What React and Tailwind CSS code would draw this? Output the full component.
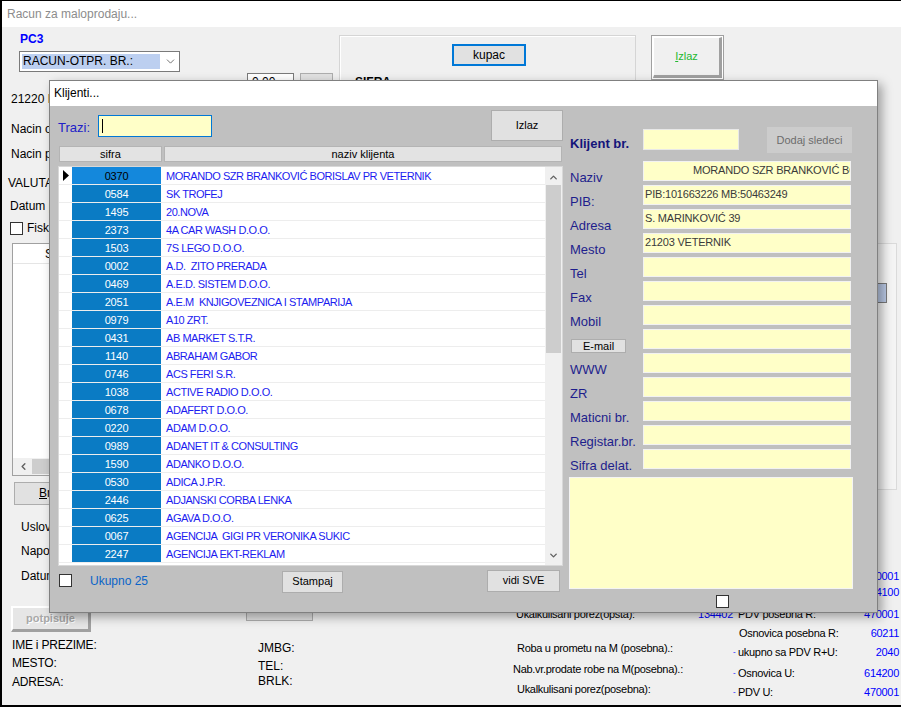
import { ChevronDown, ChevronUp, ChevronLeft } from 'lucide-react'

const clients = [
  ['0370', 'MORANDO SZR BRANKOVIĆ BORISLAV PR VETERNIK'],
  ['0584', 'SK TROFEJ'],
  ['1495', '20.NOVA'],
  ['2373', '4A CAR WASH D.O.O.'],
  ['1503', '7S LEGO D.O.O.'],
  ['0002', 'A.D.  ZITO PRERADA'],
  ['0469', 'A.E.D. SISTEM D.O.O.'],
  ['2051', 'A.E.M  KNJIGOVEZNICA I STAMPARIJA'],
  ['0979', 'A10 ZRT.'],
  ['0431', 'AB MARKET S.T.R.'],
  ['1140', 'ABRAHAM GABOR'],
  ['0746', 'ACS FERI S.R.'],
  ['1038', 'ACTIVE RADIO D.O.O.'],
  ['0678', 'ADAFERT D.O.O.'],
  ['0220', 'ADAM D.O.O.'],
  ['0989', 'ADANET IT & CONSULTING'],
  ['1590', 'ADANKO D.O.O.'],
  ['0530', 'ADICA J.P.R.'],
  ['2446', 'ADJANSKI CORBA LENKA'],
  ['0625', 'AGAVA D.O.O.'],
  ['0067', 'AGENCIJA  GIGI PR VERONIKA SUKIC'],
  ['2247', 'AGENCIJA EKT-REKLAM'],
]

const fields = [
  { label: 'Naziv', value: 'MORANDO SZR BRANKOVIĆ BORISLAV PR VETERNIK', indent: true },
  { label: 'PIB:', value: 'PIB:101663226 MB:50463249' },
  { label: 'Adresa', value: 'S. MARINKOVIĆ 39' },
  { label: 'Mesto', value: '21203 VETERNIK' },
  { label: 'Tel' },
  { label: 'Fax' },
  { label: 'Mobil' },
  { label: 'E-mail', button: true },
  { label: 'WWW' },
  { label: 'ZR' },
  { label: 'Maticni br.' },
  { label: 'Registar.br.' },
  { label: 'Sifra delat.' },
]

function Label({ children, mt }) {
  return <div className={`h-[14px] leading-[14px] text-[12px] text-black whitespace-nowrap ${mt}`}>{children}</div>
}

function Background() {
  return (
    <div className="flex h-[678px]">
      {/* leva kolona */}
      <div className="w-[238px] shrink-0 flex flex-col">
        <div className="mt-[5px] h-[14px] leading-[14px] pl-[18px] text-[12px] font-bold text-[#0000ff]">PC3</div>
        <div className="mt-[5px] ml-[17px] w-[161px] h-[21px] border border-[#7a7a7a] bg-white flex items-center px-[2px]">
          <span className="w-[138px] h-[15px] leading-[15px] bg-[#bccff0] text-[12px] text-black pl-[1px]">RACUN-OTPR. BR.:</span>
          <ChevronDown size={13} strokeWidth={1.5} className="ml-[4px] text-[#555]" />
        </div>
        <div className="mt-[20px] pl-[9px]"><Label>21220 B</Label></div>
        <div className="pl-[9px]">
          <Label mt="mt-[16px]">Nacin o</Label>
          <Label mt="mt-[11px]">Nacin p</Label>
        </div>
        <div className="pl-[6px]"><Label mt="mt-[15px]">VALUTA</Label></div>
        <div className="pl-[8px]"><Label mt="mt-[9px]">Datum p</Label></div>
        <div className="mt-[8px] pl-[8px] flex items-center gap-[4px] h-[14px]">
          <div className="w-[13px] h-[13px] border border-[#333] bg-white" />
          <span className="text-[12px]">Fiska</span>
        </div>
        <div className="mt-[8px] ml-[10px] w-[228px] h-[233px] border border-[#a0a0a0] bg-white flex flex-col">
          <div className="h-[20px] border-b border-[#e5e5e5] text-[12px] leading-[20px] pl-[32px]">S</div>
          <div className="mt-auto h-[17px] bg-[#f0f0f0] flex items-center">
            <ChevronLeft size={11} strokeWidth={3} className="ml-[5px] text-[#606060]" />
            <div className="ml-[3px] w-[60px] h-[15px] bg-[#cdcdcd]" />
          </div>
        </div>
        <div className="mt-[6px] ml-[12px] w-[100px] h-[23px] border border-[#adadad] bg-[#e1e1e1] text-[12px] leading-[21px] pl-[24px]">
          <span className="underline">B</span>r
        </div>
        <div className="pl-[19px]">
          <Label mt="mt-[15px]">Uslovi</Label>
          <Label mt="mt-[10px]">Napom</Label>
          <Label mt="mt-[11px]">Datum</Label>
        </div>
        <div className="mt-[23px] ml-[9px] w-[80px] h-[26px] bg-[#e6e6e6] border-t-2 border-l-2 border-white border-b-[3px] border-r-[3px] border-b-[#a0a0a0] border-r-[#a0a0a0] flex items-center justify-center">
          <span className="text-[11px] font-bold text-[#a8a8a8] [text-shadow:1px_1px_0_#fff]">potpisuje</span>
        </div>
        <div className="pl-[10px] tracking-[-0.2px]">
          <Label mt="mt-[6px]">IME i PREZIME:</Label>
          <Label mt="mt-[4px]">MESTO:</Label>
          <Label mt="mt-[5px]">ADRESA:</Label>
        </div>
      </div>

      {/* srednja kolona */}
      <div className="w-[99px] shrink-0 flex flex-col">
        <div className="mt-[46px] flex">
          <div className="ml-[7px] w-[47px] h-[18px] border border-[#7a7a7a] bg-white text-[12px] leading-[16px] pl-[4px]">0.00</div>
          <div className="ml-[6px] w-[33px] h-[18px] border border-[#adadad] bg-[#e1e1e1]" />
        </div>
        <div className="mt-[507px] ml-[6px] w-[67px] h-[23px] border border-[#adadad] bg-[#e1e1e1]" />
        <div className="pl-[18px]">
          <Label mt="mt-[20px]">JMBG:</Label>
          <Label mt="mt-[4px]">TEL:</Label>
          <Label mt="mt-[1px]">BRLK:</Label>
        </div>
      </div>

      {/* desna kolona */}
      <div className="flex-1 flex flex-col">
        <div className="flex items-start">
          <div className="mt-[8px] w-[297px] h-[200px] border border-[#d5d5d5] shadow-[inset_1px_1px_0_#fff] flex flex-col">
            <div className="mt-[8px] ml-[112px] w-[74px] h-[22px] border-2 border-[#0078d7] bg-[#e1e1e1] text-[12px] leading-[18px] text-center">kupac</div>
            <div className="mt-[9px] ml-[15px] text-[12px] font-bold leading-[14px]">SIFRA</div>
          </div>
          <div className="mt-[8px] ml-[15px] w-[73px] h-[45px] border border-[#a0a0a0] bg-white p-px">
            <div className="w-full h-full bg-[#f0f0f0] border-t border-l border-white border-b-[3px] border-r-[3px] border-b-[#a0a0a0] border-r-[#a0a0a0] flex items-center justify-center text-[11px] text-[#22b830]">
              <span className="underline">I</span>zlaz
            </div>
          </div>
        </div>
        <div className="mt-[8px] ml-auto mr-[4px] w-[60px] h-[247px] border border-[#dadada] bg-[#f4f4f4] flex flex-col items-end pr-[9px]">
          <div className="mt-[39px] w-[40px] h-[20px] border border-[#7a7a7a] bg-[#b9c8e4]" />
          <div className="mt-[10px] w-[40px] pl-[21px] text-[13px] font-bold text-[#000080] leading-[14px]">0</div>
        </div>
        <div className="mt-[79px] flex text-[11px] tracking-[-0.3px]">
          <div className="ml-[174px] w-[220px] flex flex-col">
            <div className="mt-[38px] h-[14px] leading-[14px] flex pl-[3px]">
              <span>Ukalkulisani porez(opsta):</span>
              <span className="ml-auto text-[#0000ff]">134402</span>
            </div>
            <div className="mt-[20px] h-[14px] leading-[14px] pl-[4px]">Roba u prometu na M (posebna).:</div>
            <div className="mt-[7px] h-[14px] leading-[14px]">Nab.vr.prodate robe na M(posebna).:</div>
            <div className="mt-[6px] h-[14px] leading-[14px] pl-[4px]">Ukalkulisani porez(posebna):</div>
          </div>
          <div className="w-[166px] flex flex-col">
            {[
              ['', 'PDV opsta R:', '470001', 'mt-0'],
              ['', 'Osnovica opsta:', '614100', 'mt-[2px]'],
              ['', 'PDV posebna R:', '470001', 'mt-[8px]'],
              ['', 'Osnovica posebna R:', '60211', 'mt-[5px]'],
              ['-', 'ukupno sa PDV R+U:', '2040', 'mt-[5px]'],
              ['-', 'Osnovica U:', '614200', 'mt-[7px]'],
              ['-', 'PDV U:', '470001', 'mt-[5px]'],
            ].map(([dash, label, value, mt], i) => (
              <div key={i} className={`h-[14px] leading-[14px] flex ${mt}`}>
                <span className="w-[4px] text-[#0000ff] text-[8px]">{dash}</span>
                <span className={i === 3 ? 'pl-[2px]' : 'pl-[1px]'}>{label}</span>
                <span className="ml-auto text-[#0000ff]">{value}</span>
              </div>
            ))}
          </div>
        </div>
      </div>
    </div>
  )
}

function Dialog() {
  return (
    <div className="absolute left-[47px] top-[79px] w-[829px] h-[533px] border border-[#808080] bg-[#c0c0c0] shadow-[4px_4px_10px_rgba(0,0,0,0.35)] flex flex-col">
      <div className="h-[25px] bg-white pl-[4px] text-[12px] leading-[25px] text-black">Klijenti...</div>
      <div className="flex flex-1">
        {/* leva strana - lista */}
        <div className="w-[515px] pl-[8px] flex flex-col">
          <div className="mt-[4px] h-[31px] flex items-center">
            <span className="w-[40px] text-[13px] text-[#2020c8] pt-[5px]">Trazi:</span>
            <div className="w-[114px] h-[22px] border border-[#0078d7] bg-[#ffffc8] flex items-center pl-[3px]">
              <div className="w-px h-[14px] bg-black" />
            </div>
            <div className="ml-auto mr-[2px] w-[72px] h-[31px] border border-[#adadad] bg-[#e1e1e1] text-[11px] flex items-center justify-center">Izlaz</div>
          </div>
          <div className="mt-[5px] h-[16px] flex gap-[2px] text-[11px] leading-[14px] pl-px">
            <div className="w-[103px] border border-[#b4b4b4] bg-[#e3e3e3] text-center">sifra</div>
            <div className="w-[398px] border border-[#b4b4b4] bg-[#e3e3e3] text-center">naziv klijenta</div>
          </div>
          <div className="mt-[4px] w-[505px] h-[400px] border border-[#d8d8d8] bg-white flex">
            <div className="flex-1 flex flex-col">
              {clients.map(([code, name], i) => (
                <div key={code} className="h-[18px] flex border-b border-[#ededed]">
                  <div className="w-[13px] flex items-center justify-center">
                    {i === 0 && (
                      <svg width="6" height="11" viewBox="0 0 6 11"><path d="M0 0 L6 5.5 L0 11 Z" fill="#000" /></svg>
                    )}
                  </div>
                  <div className={`w-[89px] text-center text-[11px] leading-[18px] tracking-[-0.2px] ${i === 0 ? 'bg-[#1488dc] text-black' : 'bg-[#0a7bc4] text-white'}`}>{code}</div>
                  <div className="flex-1 ml-px pl-[4px] text-[11px] leading-[18px] tracking-[-0.45px] text-[#1c1cf0] whitespace-pre">{name}</div>
                </div>
              ))}
            </div>
            <div className="w-[17px] bg-[#f0f0f0] flex flex-col items-center">
              <ChevronUp size={11} strokeWidth={3} className="mt-[5px] text-[#606060]" />
              <div className="mt-[2px] w-[15px] h-[168px] bg-[#cdcdcd]" />
              <ChevronDown size={11} strokeWidth={3} className="mt-auto mb-[4px] text-[#606060]" />
            </div>
          </div>
          <div className="mt-[3px] h-[23px] flex items-center">
            <div className="ml-px w-[13px] h-[13px] border border-[#333] bg-white" />
            <span className="ml-[18px] text-[12px] text-[#0a64c8]">Ukupno 25</span>
            <div className="ml-[134px] mt-[2px] w-[61px] h-[22px] border border-[#adadad] bg-[#e1e1e1] text-[11px] flex items-center justify-center">Stampaj</div>
            <div className="ml-[144px] w-[73px] h-[22px] border border-[#adadad] bg-[#e1e1e1] text-[11px] flex items-center justify-center">vidi SVE</div>
          </div>
        </div>

        {/* desna strana - podaci klijenta */}
        <div className="flex-1 pl-[5px] flex flex-col">
          <div className="mt-[21px] h-[26px] flex">
            <span className="w-[73px] pt-[10px] text-[13px] font-bold text-[#14147a] leading-[14px]">Klijent br.</span>
            <div className="mt-[2px] w-[96px] h-[21px] border border-[#e8e8e8] bg-[#ffffc8]" />
            <div className="ml-[28px] w-[85px] h-[26px] bg-[#cccccc] text-[11px] text-[#6d6d6d] flex items-center justify-center">Dodaj sledeci</div>
          </div>
          <div className="mt-[8px] flex flex-col gap-[4px]">
            {fields.map(f => (
              <div key={f.label} className="h-[20px] flex">
                {f.button ? (
                  <div className="w-[73px] pt-[10px]">
                    <div className="ml-px w-[55px] h-[14px] border border-[#adadad] bg-[#e1e1e1] text-[11px] leading-[12px] text-center">E-mail</div>
                  </div>
                ) : (
                  <span className="w-[73px] pt-[9px] text-[13px] leading-[15px] text-[#1e1e8c] whitespace-nowrap">{f.label}</span>
                )}
                <div className={`w-[208px] h-[20px] border border-[#f2f2f2] bg-[#ffffc8] overflow-hidden whitespace-nowrap text-[11px] leading-[16px] text-[#3a3a3a] tracking-[-0.2px] ${f.indent ? 'pl-[49px]' : 'pl-px'}`}>
                  {f.value}
                </div>
              </div>
            ))}
          </div>
          <div className="mt-[8px] -ml-px w-[284px] h-[112px] border border-[#f4f4f4] bg-[#ffffc8]" />
          <div className="mt-[6px] ml-[146px] w-[13px] h-[13px] border border-[#333] bg-white" />
        </div>
      </div>
    </div>
  )
}

export default function App() {
  return (
    <div className="relative w-[901px] h-[707px] overflow-hidden border-t border-l-2 border-b-2 border-black bg-[#f0f0f0] font-['Liberation_Sans',Arial,sans-serif] text-black">
      <div className="h-[26px] bg-white pl-[5px] text-[12px] leading-[26px] text-[#8c8c8c]">Racun za maloprodaju...</div>
      <Background />
      <Dialog />
    </div>
  )
}
